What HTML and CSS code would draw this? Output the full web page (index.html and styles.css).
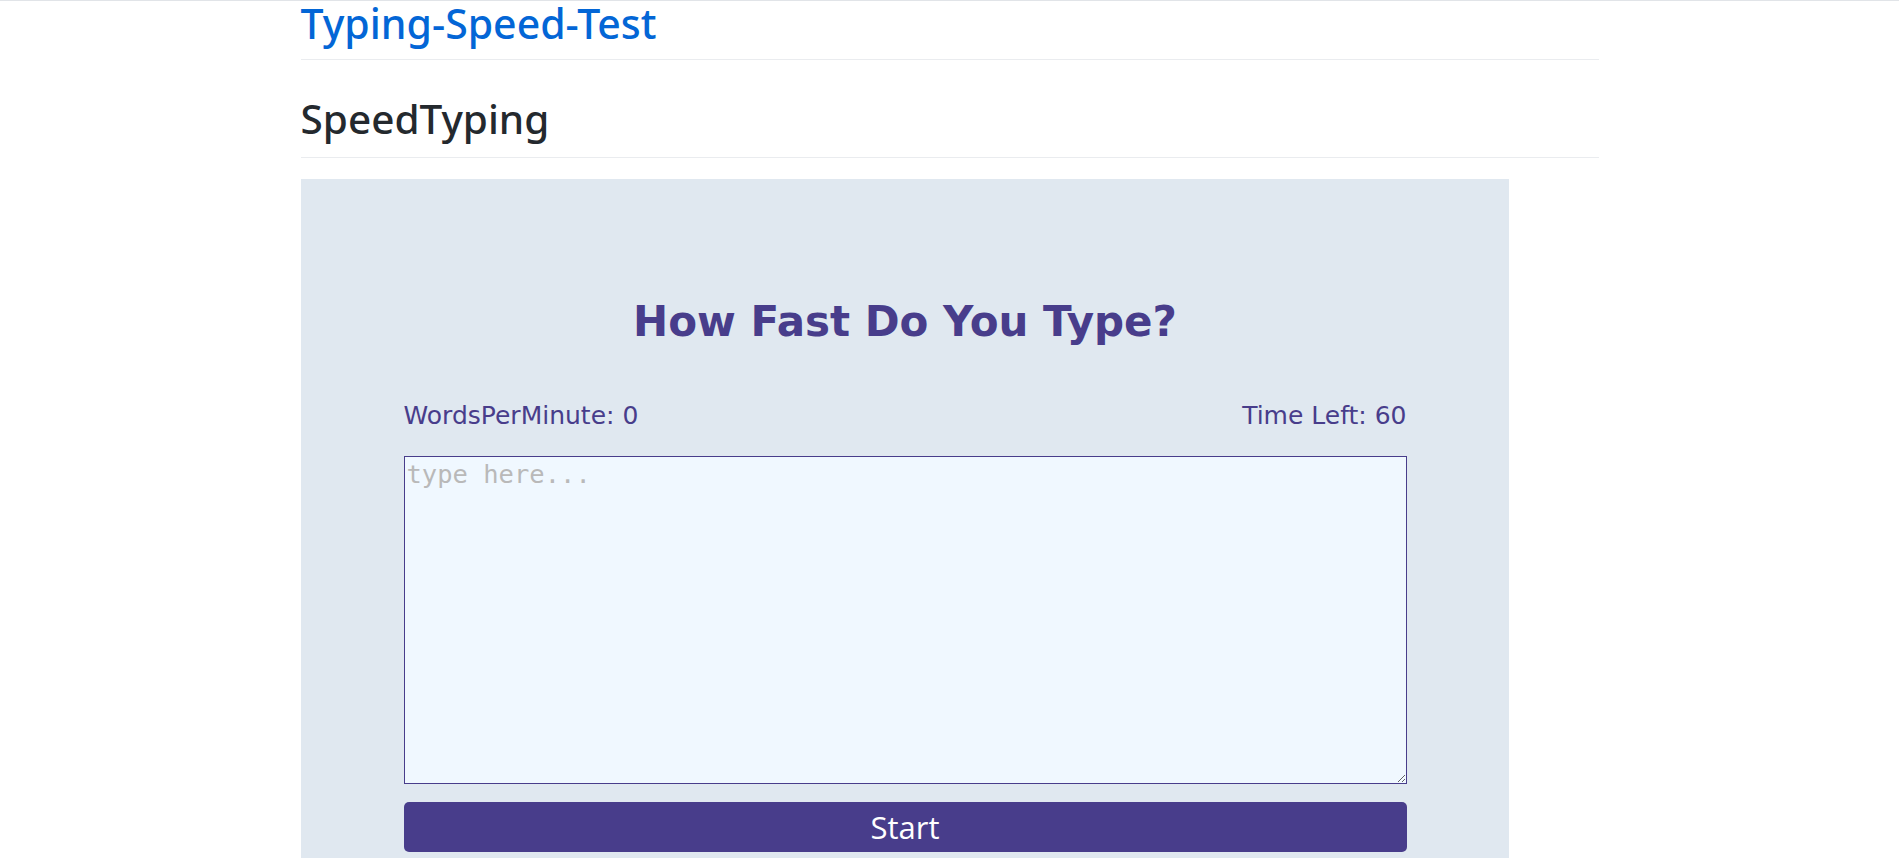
FILE: index.html
```html
<!DOCTYPE html>
<html lang="en">
<head>
<meta charset="utf-8">
<title>Typing-Speed-Test</title>
<link rel="stylesheet" href="styles.css">
</head>
<body>
<div class="topline"></div>
<main class="page">
  <h1 class="repo-title">Typing-Speed-Test</h1>
  <h2 class="section-title">SpeedTyping</h2>
  <section class="game">
    <h3 class="game-title">How Fast Do You Type?</h3>
    <div class="stats">
      <span class="stat">WordsPerMinute: 0</span>
      <span class="stat">Time Left: 60</span>
    </div>
    <textarea class="typing-area" placeholder="type here..."></textarea>
    <button class="start-btn" type="button">Start</button>
  </section>
</main>
</body>
</html>
```

FILE: styles.css
```css
html, body {
  margin: 0;
  padding: 0;
  background: #ffffff;
}

body {
  font-family: "Noto Sans", "Open Sans", sans-serif;
  overflow: hidden;
}

.topline {
  height: 1px;
  background: #e1e4e8;
}

.page {
  width: 1298px;
  margin: 0 auto;
}

.repo-title {
  margin: 0;
  padding-top: 1px;
  padding-bottom: 15px;
  font-size: 41px;
  line-height: 42px;
  font-weight: 500;
  color: #0366d6;
  border-bottom: 1px solid #eaecef;
}

.section-title {
  margin: 39px 0 0;
  padding-bottom: 18px;
  font-size: 40.5px;
  line-height: 40px;
  font-weight: 500;
  color: #24292e;
  border-bottom: 1px solid #eaecef;
}

.game {
  width: 1208px;
  margin-top: 21px;
  padding: 118px 102px 80px 103px;
  box-sizing: border-box;
  background: #e0e8f0;
  display: flex;
  flex-direction: column;
}

.game-title {
  margin: 0;
  text-align: center;
  font-family: "DejaVu Sans", sans-serif;
  font-weight: 700;
  font-size: 42px;
  line-height: 49px;
  color: #483d8b;
}

.stats {
  margin-top: 56px;
  display: flex;
  justify-content: space-between;
  font-family: "DejaVu Sans", sans-serif;
  font-size: 25px;
  line-height: 28px;
  color: #483d8b;
}

.typing-area {
  display: block;
  margin-top: 26px;
  width: 100%;
  height: 328px;
  box-sizing: border-box;
  padding: 2px;
  border: 1px solid #483d8b;
  background: #f0f8ff;
  font-family: "DejaVu Sans Mono", monospace;
  font-size: 25.5px;
  color: #483d8b;
  outline: none;
}

.typing-area::placeholder {
  color: #b9b9b9;
}

.start-btn {
  display: block;
  margin-top: 18px;
  width: 100%;
  height: 50px;
  border: none;
  border-radius: 5px;
  background: #483d8b;
  color: #ffffff;
  font-family: "Open Sans", "Noto Sans", sans-serif;
  font-size: 31px;
  line-height: 50px;
  padding: 0;
}
```
